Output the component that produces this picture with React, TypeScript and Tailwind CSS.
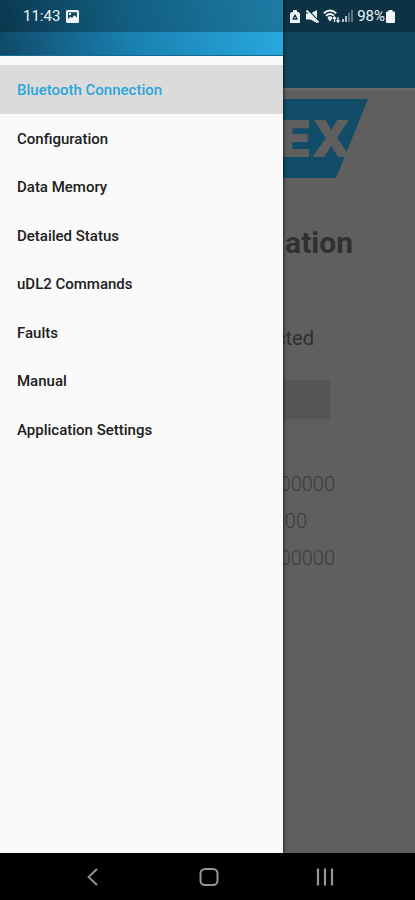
import { useState } from "react";

const menuItems = [
  "Bluetooth Connection",
  "Configuration",
  "Data Memory",
  "Detailed Status",
  "uDL2 Commands",
  "Faults",
  "Manual",
  "Application Settings",
];

function StatusBar() {
  return (
    <div className="absolute inset-x-0 top-0 z-10 flex h-8 items-center justify-between bg-black/27 pl-[23px] pr-5 text-[#eef4f7]">
      <div className="flex items-center gap-1.5 text-[15px] leading-5">
        <span>11:43</span>
        <svg viewBox="0 0 13 13" className="size-[13px]">
          <rect width="13" height="13" rx="1.5" fill="currentColor" />
          <path d="M2 2.2h9v5.3L8.5 5.2 6 8 4.500 6.800 2 9z" fill="#164b62" />
          <rect x="3" y="3" width="2" height="2" fill="currentColor" />
        </svg>
      </div>
      <div className="flex items-center text-[15px] leading-5">
        <svg viewBox="0 0 10 13" className="mr-[6px] h-[13px] w-[10px]">
          <path d="M3 0h4v2h1.500L10 3.500V13H0V3.500L1.500 2H3z" fill="currentColor" />
          <path d="M5 5 7 9H3z" fill="none" stroke="#0a3447" strokeWidth="1.300" strokeLinejoin="round" />
        </svg>
        <svg viewBox="0 0 13 13" className="mr-1 size-[13px]">
          <path d="M0 3.500h4.500L11 0v13L4.500 9.500H0z" fill="currentColor" />
          <path d="m2 0 11 11.500" stroke="#0a3447" strokeWidth="1.500" />
          <path d="m.5.5 12 12" stroke="currentColor" strokeWidth="1.800" />
        </svg>
        <svg viewBox="0 0 17 14" className="mr-[2px] h-[14px] w-[17px]" fill="none" stroke="currentColor">
          <path d="M.8 4.200Q7 -1 13.200 4.200M3 6.700q4-3.200 8 0M5 9q2-1.500 4 0" strokeWidth="1.900" />
          <path d="M7 12.500 4.500 9.200h5z" fill="currentColor" stroke="none" />
          <path d="M11.500 13V8M9.800 9.700 11.500 8l1.500 1.700M15 8v5m-1.500-1.700L15 13l1.500-1.700" strokeWidth="1.300" />
        </svg>
        <svg viewBox="0 0 11 12" className="mr-1 h-3 w-[11px]" fill="currentColor">
          <path d="M0 9h2v3H0zM3 6h2v6H3z" opacity=".75" />
          <path d="M6 3h2v9H6zM9 0h2v12H9z" opacity=".35" />
        </svg>
        <span>98%</span>
        <svg viewBox="0 0 9 13" className="ml-px h-[13px] w-[9px]">
          <path d="M2.500 0h4v1.500H8a1 1 0 0 1 1 1V12a1 1 0 0 1-1 1H1a1 1 0 0 1-1-1V2.500a1 1 0 0 1 1-1h1.500z" fill="currentColor" />
        </svg>
      </div>
    </div>
  );
}

function Drawer() {
  const [active, setActive] = useState(menuItems[0]);

  return (
    <aside className="z-[5] w-[283px] shrink-0 bg-[#fafafa] shadow-[1px_0_3px_rgba(0,0,0,0.6)]">
      <div className="h-14 border-b border-[#126a94] bg-linear-[75deg] from-[#0f4a68] via-[#1980b0] via-45% to-[#29abe2]" />
      <nav className="mt-[9px] grid h-[388px] grid-rows-8">
        {menuItems.map((item) => (
          <button
            key={item}
            type="button"
            onClick={() => setActive(item)}
            className={
              item === active
                ? "bg-[#dbdbdb] px-[17px] pt-0.5 text-left text-[15px] font-medium text-[#2ba6db]"
                : "px-[17px] pt-0.5 text-left text-[15px] font-medium text-[#202020]"
            }
          >
            {item}
          </button>
        ))}
      </nav>
    </aside>
  );
}

function Logo() {
  return (
    <svg viewBox="0 0 85 79" className="mt-[9px] h-[79px] w-[85px]">
      <path d="M0 0h85L53 79H0z" fill="#114c68" />
      <text x="-3" y="58" fontSize="51" fontWeight="900" fill="#5f5f5f" fontFamily="Inter, sans-serif">
        EX
      </text>
    </svg>
  );
}

function Page() {
  return (
    <main className="min-w-0 flex-1 overflow-hidden bg-[#5f5f5f]">
      <div className="h-[90px] border-b-2 border-[#6b6863] bg-[#11455c]" />
      <Logo />
      <div className="mt-[45px] flex justify-end pr-[62px]">
        <h1 className="text-[30px] leading-10 font-bold text-[#303030]">ation</h1>
      </div>
      <div className="mt-[61px] flex justify-end pr-[101px]">
        <p className="text-[20px] leading-7 text-[#303030]">cted</p>
      </div>
      <div className="mt-7 mr-[85px] h-[39px] bg-[#555555]" />
      <div className="mt-[51px] flex flex-col gap-[9px] text-[20px] leading-7 font-light text-[#3c3c3c]">
        <div className="flex justify-end pr-20">00000</div>
        <div className="flex justify-end pr-[108px]">00</div>
        <div className="flex justify-end pr-20">00000</div>
      </div>
    </main>
  );
}

function NavBar() {
  return (
    <div className="flex h-[47px] items-center justify-around bg-black pr-8 pl-[35px] text-[#969696]">
      <button type="button" aria-label="Back">
        <svg viewBox="0 0 20 20" className="size-5" fill="none" stroke="currentColor" strokeWidth="1.800">
          <path d="m14 2-8.500 8L14 18" />
        </svg>
      </button>
      <button type="button" aria-label="Home">
        <svg viewBox="0 0 20 20" className="size-5" fill="none" stroke="currentColor" strokeWidth="2">
          <rect x="1.500" y="2" width="17" height="16" rx="4.500" />
        </svg>
      </button>
      <button type="button" aria-label="Recent apps">
        <svg viewBox="0 0 20 20" className="size-5" stroke="currentColor" strokeWidth="2.200">
          <path d="M3 1.500v17M10 1.500v17M17 1.500v17" />
        </svg>
      </button>
    </div>
  );
}

export default function App() {
  return (
    <div className="relative flex min-h-screen flex-col bg-black font-['Roboto',sans-serif]">
      <StatusBar />
      <div className="flex flex-1">
        <Drawer />
        <Page />
      </div>
      <NavBar />
    </div>
  );
}
